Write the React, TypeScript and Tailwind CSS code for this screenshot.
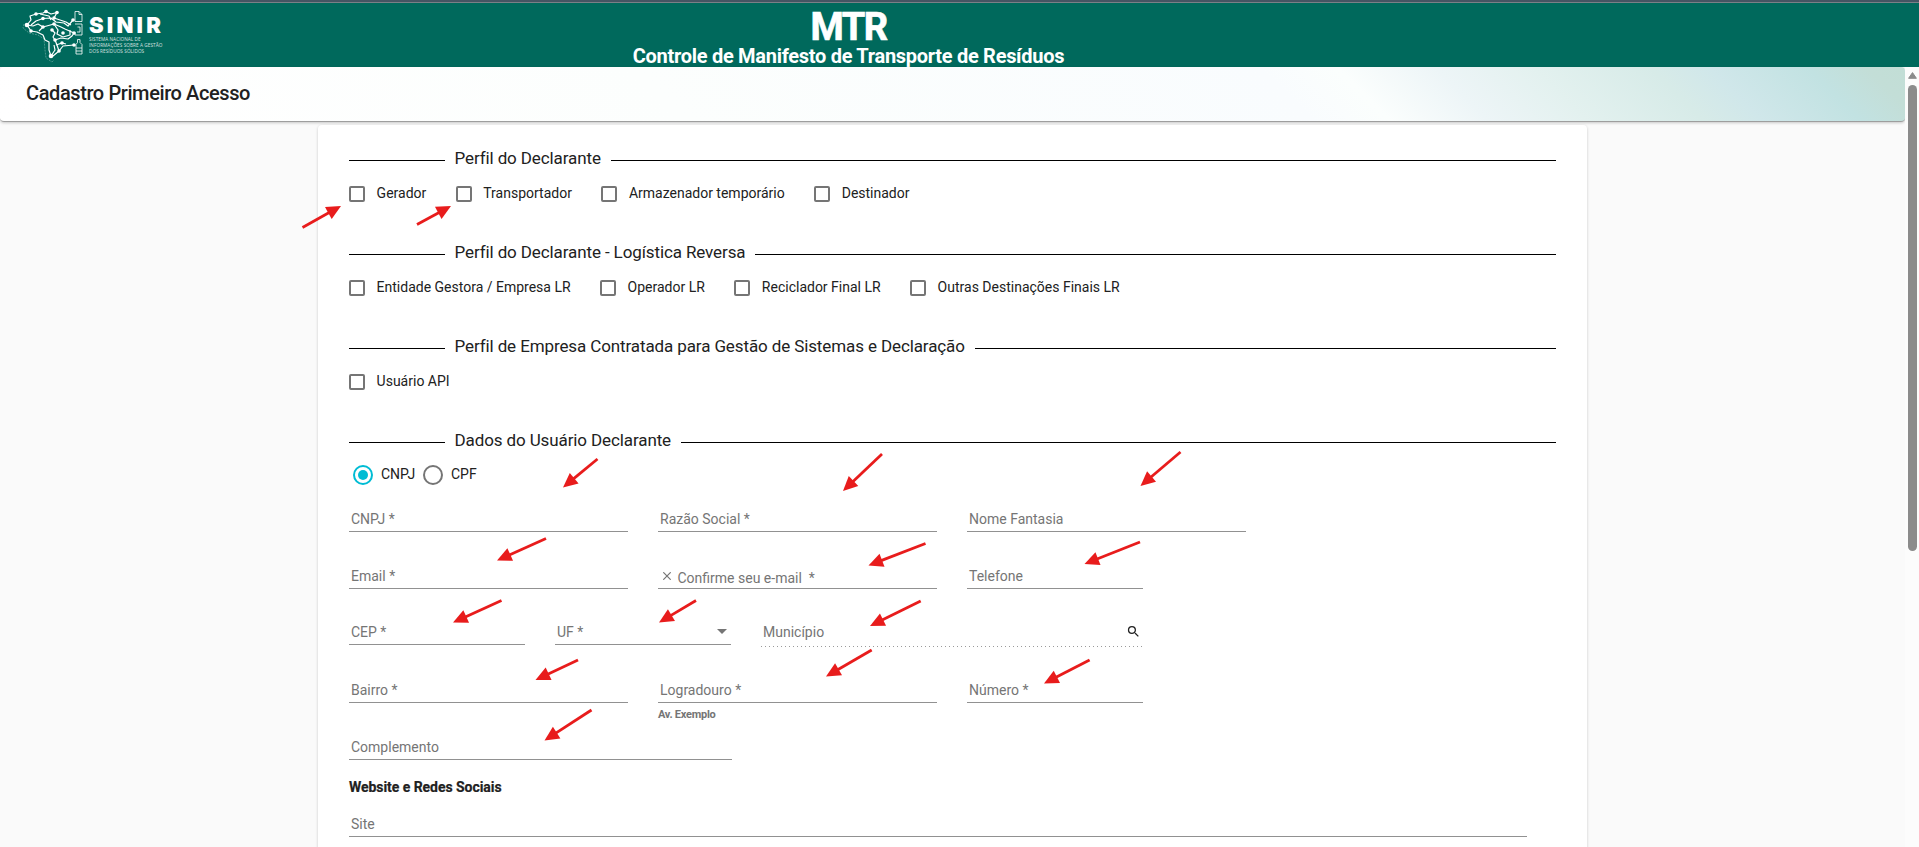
import type { ReactNode } from "react";
import { MdSearch } from "react-icons/md";

const nodes: [number, number][] = [
  [27, 25], [31, 31], [36, 14], [46, 11.5], [57, 12.5], [54, 18], [43, 18.5], [43, 27],
  [54, 24], [52, 30], [63, 33], [73, 20], [74, 33], [55, 40], [62, 43], [74, 45], [59, 51], [51, 56],
];

function Logo() {
  return (
    <div className="flex w-[145px] shrink-0 items-start gap-[6px] pt-[5px] text-white">
      <svg className="h-[56px] w-[61px] shrink-0" viewBox="22 8 61 56" fill="none" stroke="currentColor" strokeLinejoin="round">
        <g strokeWidth="1.2">
          <path d="M27 25 31 20 30 16 36 14 43 13 46 11.5 51 14 57 12.5 54 18 60 20 66 22 71 25" />
          <path d="M27 25 31 31 37 32 43 35 45 40 49 42 49 50 51 56 53 56 59 51 63 46 74 45" />
          <path d="M31 25 36 21 43 18.5 51 18 56 22 64 23 68 26 73 20" />
          <path d="M27 25 33 26 38 24 43 27 39 31" />
          <path d="M43 27 54 24 61 27 65 29 74 33" />
          <path d="M52 30 55 33 53 37 55 40 61 38 68 39 72 36 74 33" />
          <path d="M56 45 62 43 66 44" />
          <path d="M54 24 58 30 57 34 63 37 70 35 70 30" />
          <path d="M40 14 49 16 51 20" />
          <path d="M55 40 57 45 59 51M51 56 55 50 54 45" />
        </g>
        <path d="M24 24 23 28 29 33 38 35 44 39 45 50 46 58 52 62 54 60" strokeWidth=".5" opacity=".6" strokeDasharray="2 1" />
        <g strokeWidth=".8">
          <path d="M75 11.500h4l3 3v7h-7zM79 11.500v3h3" />
          <path d="M75 24h7v11h-7v-3M77.500 27h2.500v5h-3" />
          <path d="M77.500 39.500h2.500v3l2 2v9.500h-6v-9.500l1.500-2zM76 48h6M76 51h6" />
        </g>
        <g fill="currentColor" stroke="none">
          {nodes.map(([x, y], i) => (
            <circle key={i} cx={x} cy={y} r={i === 0 || i === 17 ? 2.3 : 1.8} />
          ))}
        </g>
      </svg>
      <div className="pt-[6px] font-['Open_Sans',sans-serif]">
        <div className="h-[22px] font-[Inter,sans-serif] text-[22px] leading-[22px] font-black tracking-[3.200px]">SINIR</div>
        <div className="text-[4.700px] leading-[6px] tracking-[0.060px] whitespace-nowrap opacity-80">
          <div>SISTEMA NACIONAL DE</div>
          <div>INFORMAÇÕES SOBRE A GESTÃO</div>
          <div>DOS RESÍDUOS SÓLIDOS</div>
        </div>
      </div>
    </div>
  );
}

function SectionTitle({ children }: { children: ReactNode }) {
  return (
    <div className="flex h-[24px] items-center text-[17px] leading-[24px] tracking-[-0.11px] text-[#212121]">
      <span className="mt-[4px] h-px w-[96px] bg-black" />
      <span className="pr-[10px] pl-[9.500px] whitespace-nowrap">{children}</span>
      <span className="mt-[4px] h-px grow bg-black" />
    </div>
  );
}

function Check({ label }: { label: string }) {
  return (
    <label className="flex items-center gap-[11.600px]">
      <span className="size-[16px] rounded-[2px] border-2 border-[#757575]" />
      <span className="relative -top-px text-[14px] leading-[20px] whitespace-nowrap text-[#212121]">{label}</span>
    </label>
  );
}

function CheckSection({ title, options }: { title: string; options: string[] }) {
  return (
    <section className="h-[94px]">
      <SectionTitle>{title}</SectionTitle>
      <div className="mt-[14px] flex h-[20px] items-center gap-[29.400px]">
        {options.map((o) => (
          <Check key={o} label={o} />
        ))}
      </div>
    </section>
  );
}

function Field({ label, width, children, hint }: { label: string; width: string; children?: ReactNode; hint?: string }) {
  return (
    <div className={`relative ${width} flex h-[28px] items-start justify-between border-b border-[#919191] pl-[2px]`}>
      <span className="pt-[5px] text-[14px] leading-[20px] whitespace-nowrap text-[#757575]">{label}</span>
      {children}
      {hint && (
        <span className="absolute top-full left-0 mt-[5px] text-[11px] leading-[16px] font-bold tracking-[-0.25px] text-[#757575]">{hint}</span>
      )}
    </div>
  );
}

const arrows: [number, number, number, number][] = [
  [302.5, 227.5, 341, 206],
  [417, 224.5, 451, 206],
  [597.5, 459, 563, 487.5],
  [882, 454, 843, 491],
  [1180.5, 452, 1140.5, 486],
  [546, 538.5, 497, 560.5],
  [925.5, 543.5, 868.5, 565.5],
  [1140, 542, 1084.5, 564],
  [501.5, 600.5, 453, 622.5],
  [696, 600.5, 659, 622.5],
  [920.7, 601, 870, 626],
  [578, 660, 535.5, 680],
  [871.7, 650, 826, 676.5],
  [1089.6, 660, 1044, 683.5],
  [591.5, 710, 544.5, 740.5],
];

function Arrows() {
  return (
    <svg className="pointer-events-none absolute top-0 left-0 h-[847px] w-[1919px]" viewBox="0 0 1919 847" fill="#e81c1c" stroke="#e81c1c">
      {arrows.map(([x1, y1, x2, y2], i) => {
        const d = Math.hypot(x2 - x1, y2 - y1);
        const ux = (x2 - x1) / d;
        const uy = (y2 - y1) / d;
        const bx = x2 - ux * 14.5;
        const by = y2 - uy * 14.5;
        return (
          <g key={i}>
            <line x1={x1} y1={y1} x2={bx + ux} y2={by + uy} strokeWidth="2.8" />
            <polygon stroke="none" points={`${x2},${y2} ${bx - uy * 6.9},${by + ux * 6.9} ${bx + uy * 6.9},${by - ux * 6.9}`} />
          </g>
        );
      })}
    </svg>
  );
}

export default function App() {
  return (
    <div className="relative flex h-[847px] w-[1919px] flex-col overflow-hidden bg-[#fafafa] font-[Roboto,sans-serif]">
      <div className="h-[3px] shrink-0 border-b border-[#7b8087] bg-[#455563]" />
      <header className="flex h-[64px] shrink-0 bg-[#00695c] pl-[22px] text-white">
        <Logo />
        <div className="flex w-[1363px] flex-col items-center font-bold">
          <div className="mt-[5px] h-[36px] text-[38px] leading-[38px] tracking-[-1.500px] [-webkit-text-stroke:0.7px_white]">MTR</div>
          <div className="h-[23px] text-[20px] leading-[24px] tracking-[-0.29px]">Controle de Manifesto de Transporte de Resíduos</div>
        </div>
      </header>

      <div className="flex min-h-0 grow">
        <main className="w-[1905px]">
          <div className="flex h-[55px] items-center rounded-[4px] border-b border-[#9e9e9e] bg-[linear-gradient(45deg,#ffffff_0%,#fcfefd_35%,#f9fcfe_67%,#fbfefd_71%,#edf5f7_76%,#e3f1ef_81%,#d7ebe8_87%,#d0e7ea_90%,#c2e2e2_95%,#c3ded7_98%,#c2ded6_100%)] pb-[2px] pl-[26px] shadow-[0_1px_3px_rgba(0,0,0,0.2)]">
            <h1 className="text-[20px] leading-[24px] font-medium tracking-[-0.4px] text-[#212121]">Cadastro Primeiro Acesso</h1>
          </div>

          <div className="mt-[3px] ml-[318px] h-[760px] w-[1269px] rounded-[4px] bg-white px-[31px] pt-[21px] shadow-[0_1px_3px_rgba(0,0,0,0.2)]">
            <CheckSection title="Perfil do Declarante" options={["Gerador", "Transportador", "Armazenador temporário", "Destinador"]} />
            <CheckSection
              title="Perfil do Declarante - Logística Reversa"
              options={["Entidade Gestora / Empresa LR", "Operador LR", "Reciclador Final LR", "Outras Destinações Finais LR"]}
            />
            <CheckSection title="Perfil de Empresa Contratada para Gestão de Sistemas e Declaração" options={["Usuário API"]} />

            <SectionTitle>Dados do Usuário Declarante</SectionTitle>
            <div className="mt-[13px] flex h-[20px] items-center pl-[4px] text-[14px] text-[#212121]">
              <span className="flex size-[20px] items-center justify-center rounded-full border-2 border-[#00bcd4]">
                <span className="size-[10px] rounded-full bg-[#00bcd4]" />
              </span>
              <span className="relative -top-px ml-[8px] w-[42px]">CNPJ</span>
              <span className="size-[20px] rounded-full border-2 border-[#757575]" />
              <span className="relative -top-px ml-[8px]">CPF</span>
            </div>

            <div className="flex h-[47px] items-end gap-[30px]">
              <Field label="CNPJ *" width="w-[279px]" />
              <Field label="Razão Social *" width="w-[279px]" />
              <Field label="Nome Fantasia" width="w-[279px]" />
            </div>
            <div className="flex h-[57px] items-end gap-[30px]">
              <Field label="Email *" width="w-[279px]" />
              <div className="flex h-[28px] w-[279px] items-start border-b border-[#919191] pl-[5px] text-[#757575]">
                <svg className="mt-[11px] size-[8px]" viewBox="0 0 8 8" fill="none" stroke="currentColor" strokeWidth="1.2">
                  <path d="M.3.3 7.700 7.700M7.700.3.3 7.700" />
                </svg>
                <span className="pt-[7px] pl-[6.500px] text-[14px] leading-[20px] whitespace-pre">Confirme seu e-mail  *</span>
              </div>
              <Field label="Telefone" width="w-[176px]" />
            </div>
            <div className="flex h-[56px] items-end gap-[30px]">
              <Field label="CEP *" width="w-[176px]" />
              <Field label="UF *" width="w-[176px]">
                <svg className="mt-[12px] mr-[4px] h-[5px] w-[10px]" viewBox="0 0 10 5">
                  <path d="M0 0h10L5 5z" fill="#757575" />
                </svg>
              </Field>
              <div className="-mb-[2px] flex h-[30px] w-[382px] flex-col justify-between">
                <div className="flex items-start justify-between pt-[5px] pl-[2px]">
                  <span className="text-[14px] leading-[20px] text-[#757575]">Município</span>
                  <MdSearch className="mt-[2px] mr-[2px] size-[15px] text-[#212121]" />
                </div>
                <span className="h-px bg-[repeating-linear-gradient(90deg,#9a9a9a_0_1px,transparent_1px_4px)]" />
              </div>
            </div>
            <div className="flex h-[58px] items-end gap-[30px]">
              <Field label="Bairro *" width="w-[279px]" />
              <Field label="Logradouro *" width="w-[279px]" hint="Av. Exemplo" />
              <Field label="Número *" width="w-[176px]" />
            </div>
            <div className="flex h-[57px] items-end">
              <Field label="Complemento" width="w-[383px]" />
            </div>
            <div className="mt-[17px] text-[14px] leading-[20px] font-bold tracking-[-0.050px] text-[#212121] [-webkit-text-stroke:0.2px_#212121]">
              Website e Redes Sociais
            </div>
            <div className="flex h-[40px] items-end">
              <Field label="Site" width="w-[1178px]" />
            </div>
          </div>
        </main>

        <div className="flex w-[14px] flex-col items-center bg-[#fcfcfc] pt-[5px] pr-[2px] pl-[3px]">
          <svg className="h-[7px] w-[9px] shrink-0" viewBox="0 0 9 7">
            <path d="M4.500.6 8.400 6.300H.6z" fill="#8b8b8b" stroke="#8b8b8b" strokeLinejoin="round" />
          </svg>
          <div className="mt-[6px] h-[466px] w-[9px] shrink-0 rounded-full bg-[#8b8b8b]" />
        </div>
      </div>
      <Arrows />
    </div>
  );
}
